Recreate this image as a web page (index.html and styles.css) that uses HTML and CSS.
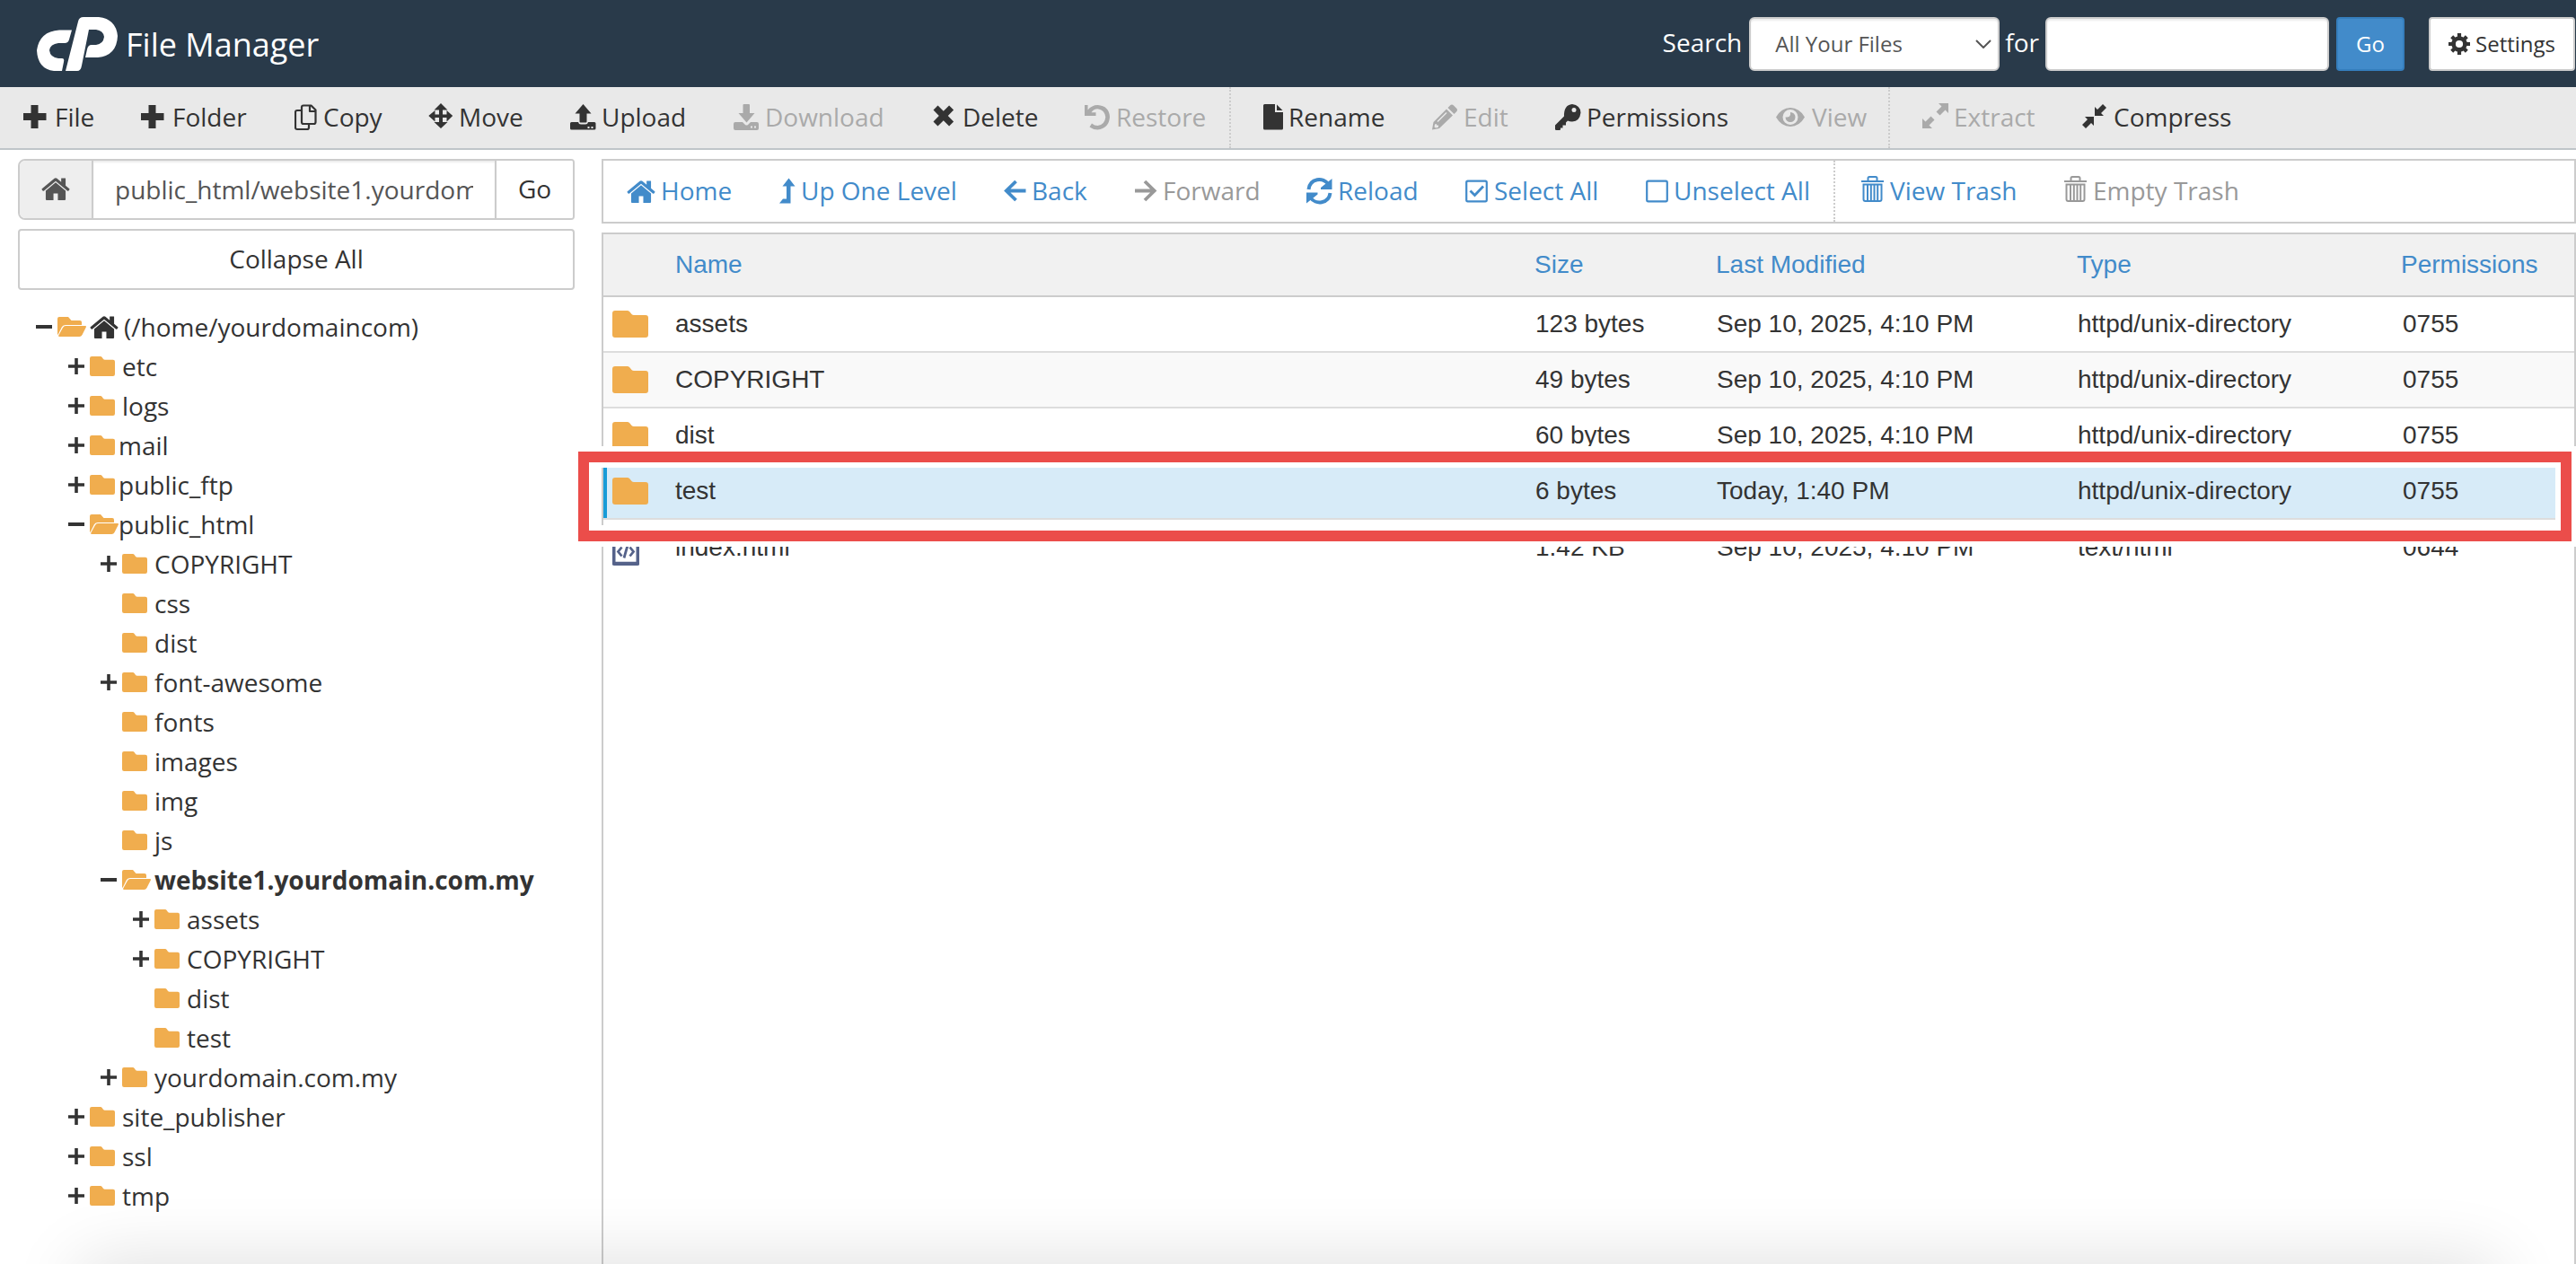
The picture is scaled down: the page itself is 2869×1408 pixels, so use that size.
FILE: index.html
```html
<!DOCTYPE html>
<html lang="en">
<head>
    <meta charset="UTF-8">
    <meta name="viewport" content="width=device-width, initial-scale=1.0">
    <title>File Manager</title>
    <link rel="stylesheet" href="styles.css">
</head>
<body>
    <!-- icon set -->
    <svg class="sprite">
        <symbol id="plus" viewBox="0 0 29 36"><path d="M8.500 4h8v9h9v8h-9v9h-8v-9h-8.500v-8h8.500z"/></symbol>
        <symbol id="copy" viewBox="0 0 26 36"><path fill="none" stroke="currentColor" stroke-width="2.200" stroke-linejoin="round" d="M10 4.500h8.500l5 5V23q0 2-2 2H10q-2 0-2-2V6.500q0-2 2-2zM17 5v6h6.500M8 10H3q-2 0-2 2v17q0 2 2 2h11q2 0 2-2v-3.500"/></symbol>
        <symbol id="move" viewBox="0 0 28 36"><path d="M14 2l7.500 7.500h-5.500v5h4.500v-4.500l6.700 6-6.700 6.500v-4.500H16v5h5.500L14 30l-7.500-7h5.500v-5H7.500v4.500L.3 16l7.200-6v4.500H12v-5H6.500z"/></symbol>
        <symbol id="upload" viewBox="0 0 29 36"><path d="M14.500 3l9 10.500h-5v9q0 1-1 1h-6q-1 0-1-1v-9h-5z"/><path d="M1.500 23h7.500q.5 2.500 3 2.500h5q2.500 0 3-2.500h7q1.500 0 1.500 1.500v5.500q0 1.500-1.500 1.500h-25.500Q0 31.500 0 30v-5.500Q0 23 1.500 23zm18 5v2h2v-2zm4 0v2h2v-2z"/></symbol>
        <symbol id="download" viewBox="0 0 29 36"><path d="M11.500 3h5.500q1 0 1 1v9h5.500l-9 10.500L5.500 13h5V4q0-1 1-1z"/><path d="M2 23h8l3 3q1.500 1 3 0l3-3h7q2 0 2 2v5q0 2-2 2H2q-2 0-2-2v-5q0-2 2-2zm17 4.500v2h2v-2zm4 0v2h2v-2z"/></symbol>
        <symbol id="remove" viewBox="0 0 27 36"><path d="M5.500 4.500l6.300 6.300 6.300-6.300 5 5-6.300 6.500 6.300 6.500-5 5-6.300-6.300-6.300 6.300-5-5L6.800 16 .5 9.500z"/></symbol>
        <symbol id="undo" viewBox="0 0 29 36"><path d="M0 4h3.500v5.500Q8 4 14.500 4 27.500 5 28 17.500 27 30 14.500 31.500q-5 0-9-3l2.500-4q3 2.500 6.500 2.500 8-1 8.800-9.500-1-8.500-8.800-9.300-4.500 0-7 4h5V16H0z"/></symbol>
        <symbol id="file" viewBox="0 0 22 36"><path d="M1.500 3H13v9h9v18q0 1.500-1.500 1.500h-19Q0 31.500 0 30V4.500Q0 3 1.500 3zM15 3.500l6.500 6.500H15z"/></symbol>
        <symbol id="pencil" viewBox="0 0 29 36"><path fill-rule="evenodd" d="M20 4.500q2-2 4 0l3 3q2 2 0 4l-2.500 2.500-7-7zM16 8.500l7 7L8 30l-8 1.500L1.500 23zM3 25.500l-.5 3 1.500 1 3-.7v-2.300H5v-1.500zM15.500 12L5.500 22l1 1 10-10z"/></symbol>
        <symbol id="key" viewBox="0 0 29 36"><path fill-rule="evenodd" d="M19 3q9 1 9.500 9.500-1 9.500-9.500 10-3 0-5-1l-2 2v3H8.500v3H6V31q0 1-1 1H1.500Q0 32 0 31v-4.500l10-10Q9.500 4 19 3zm2 4q-2.500 0-2.500 2.500T21 12t2.500-2.500T21 7z"/></symbol>
        <symbol id="eye" viewBox="0 0 34 36"><path fill-rule="evenodd" d="M0 17.500Q6 7 16 7t16 10.500Q26 28 16 28T0 17.500zM16 9a8.500 8.500 0 1 0 0 17 8.500 8.500 0 0 0 0-17zm0 3a5.500 5.500 0 1 1-5.500 5.500h2q2.500 0 3.500-2.500z"/></symbol>
        <symbol id="expand" viewBox="0 0 29 36"><path d="M18 2h11v11l-3.500-3.500-6 6-4-4 6-6zM0 30V19l3.500 3.500 6-6 4 4-6 6L11 30z"/></symbol>
        <symbol id="shrink" viewBox="0 0 29 36"><path d="M14 16V6l3 3 6-6 4 4-6 6 3 3zM13 17v10l-3-3-6 6-4-4 6-6-3-3z"/></symbol>
        <symbol id="house" viewBox="75 235 1642 1301"><path d="M1472 992v480q0 26-19 45t-45 19h-384v-384h-256v384h-384q-26 0-45-19t-19-45v-480q0-1 .5-3t.5-3l575-474 575 474q1 2 1 6zm223-69l-62 74q-8 9-21 11h-3q-13 0-21-7l-692-577-692 577q-12 8-24 7-13-2-21-11l-62-74q-8-10-7-23.500t11-21.500l719-599q32-26 76-26t76 26l244 204v-195q0-14 9-23t23-9h192q14 0 23 9t9 23v408l219 182q10 8 11 21.500t-7 23.500z"/></symbol>
        <symbol id="level-up" viewBox="0 0 18 36"><path d="M10.500 3.500l7 9h-5V31.500H0l4-5h4v-14H3.500z"/></symbol>
        <symbol id="arrow-left" viewBox="0 0 25 36"><path fill="none" stroke="currentColor" stroke-width="3.800" d="M24.500 17.500H3M13.500 7L2.800 17.500 13.500 28"/></symbol>
        <symbol id="arrow-right" viewBox="0 0 25 36"><path fill="none" stroke="currentColor" stroke-width="3.800" d="M0 17.500h21.500M11 7l10.700 10.500L11 28"/></symbol>
        <symbol id="refresh" viewBox="0 0 29 36"><path fill="none" stroke="currentColor" stroke-width="4" d="M2.500 16C4 3 19 2 24.500 10.500M26.500 20C25 32 10 33.500 4.500 25"/><path d="M28.500 4v12H16v-2zM0 31.500v-12h12.500v2z"/></symbol>
        <symbol id="check" viewBox="0 0 26 36"><rect x="1.200" y="6.700" width="22.600" height="22.600" rx="1.500" fill="none" stroke="currentColor" stroke-width="2.200"/><path fill="none" stroke="currentColor" stroke-width="2.800" d="M5.500 17.500l5 5 9.500-10"/></symbol>
        <symbol id="square" viewBox="0 0 25 36"><rect x="1.200" y="6.700" width="22.600" height="22.600" rx="1.500" fill="none" stroke="currentColor" stroke-width="2.200"/></symbol>
        <symbol id="trash" viewBox="0 0 26 36"><path fill="none" stroke="currentColor" stroke-width="2" d="M0 7h25M7.500 7V3.500q0-1.500 1.500-1.500h7q1.500 0 1.500 1.500V7M2.500 10.500h20V27q0 2-2 2h-16q-2 0-2-2zM7 11v18M10.800 11v18M14.500 11v18M18.200 11v18"/></symbol>
        <symbol id="cog" viewBox="0 0 24 24"><circle cx="12" cy="12" r="6.400" fill="none" stroke="currentColor" stroke-width="4.600"/><path stroke="currentColor" stroke-width="4.200" d="M12 0v5M12 19v5M0 12h5M19 12h5M3.700 3.700l3.500 3.500M16.800 16.800l3.500 3.500M3.700 20.300l3.500-3.500M16.800 7.200l3.500-3.500"/></symbol>
        <symbol id="folder" viewBox="0 0 40 30" preserveAspectRatio="none"><path d="M3 0h14q1.500 0 2.500 1.500l2 2.500q1 1 2.500 1h13q3 0 3 3v19q0 3-3 3H3q-3 0-3-3V3q0-3 3-3z"/></symbol>
        <symbol id="folder-open" viewBox="0 0 32 22"><path d="M2 0h10l3.500 4H25q2 0 2 2v3H9Q6.500 9 5 11L.500 20 0 19V2q0-2 2-2z"/><path d="M9 10h22q1.500 0 .8 1.500L27.500 20q-1 2-3 2H2Q.800 22 1.300 20.500L6 12q1-2 3-2z"/></symbol>
        <symbol id="expander" viewBox="0 0 18 18"><path d="M7.200 0h3.600v7.200H18v3.600h-7.200V18H7.200v-7.200H0V7.200h7.200z"/></symbol>
        <symbol id="collapser" viewBox="0 0 18 18"><path d="M0 7h18v4H0z"/></symbol>
        <symbol id="code" viewBox="0 0 30 40"><path fill="none" stroke="currentColor" stroke-width="3.500" d="M1.750 2h18l8.500 8v27.500H1.750z"/><path d="M0 36h30v2q0 2-2 2H2q-2 0-2-2z"/><path fill="none" stroke="currentColor" stroke-width="2.800" d="M10.500 19.500l-4 5 4 5M19.500 19.500l4 5-4 5M17 17.500l-4 14"/></symbol>
    </svg>

    <header class="navbar">
        <svg class="logo" viewBox="0 0 90 60"><path d="M52 0h17Q88 2 90 21q-1 22-22 24H54l2-9q1-5 5-5h5q8-1 9-9-1-7-9-8h-8l-8 40q-1 6-5 6H32L46 5q1-5 6-5z"/><path d="M39 14.500H25Q3 16 0 37q1 21 19 23h9l2-10q1-4-2-4h-4q-9-1-10-9 1-7 10-8h7q4 0 5-4z"/></svg>
        <h1>File Manager</h1>
        <form class="search">
            <label>Search</label>
            <div class="select">All Your Files <svg class="caret" viewBox="0 0 18 10"><path d="M1 1l8 8 8-8"/></svg></div>
            <label>for</label>
            <input type="text" class="query">
            <button type="button" class="btn-go">Go</button>
            <button type="button" class="btn-settings"><svg><use href="#cog"/></svg>Settings</button>
        </form>
    </header>

    <nav class="toolbar">
        <div class="group main-1">
            <a><svg class="i29"><use href="#plus"/></svg>File</a>
            <a><svg class="i29"><use href="#plus"/></svg>Folder</a>
            <a><svg class="i26"><use href="#copy"/></svg>Copy</a>
            <a><svg class="i28"><use href="#move"/></svg>Move</a>
            <a><svg class="i29"><use href="#upload"/></svg>Upload</a>
            <a class="disabled"><svg class="i29"><use href="#download"/></svg>Download</a>
            <a><svg class="i27"><use href="#remove"/></svg>Delete</a>
            <a class="disabled"><svg class="i29"><use href="#undo"/></svg>Restore</a>
        </div>
        <div class="group main-2">
            <a><svg class="i22"><use href="#file"/></svg>Rename</a>
            <a class="disabled"><svg class="i29"><use href="#pencil"/></svg>Edit</a>
            <a><svg class="i29"><use href="#key"/></svg>Permissions</a>
            <a class="disabled"><svg class="i34"><use href="#eye"/></svg>View</a>
        </div>
        <div class="group main-3">
            <a class="disabled"><svg class="i29"><use href="#expand"/></svg>Extract</a>
            <a><svg class="i29"><use href="#shrink"/></svg>Compress</a>
        </div>
    </nav>

    <main>
        <aside>
            <div class="path">
                <span class="addon"><svg class="house"><use href="#house"/></svg></span>
                <input type="text" class="field" value="public_html/website1.yourdomain.com.my">
                <button type="button">Go</button>
            </div>
            <button type="button" class="collapse">Collapse All</button>
            <ul class="tree">
                <li class="l0"><svg class="tog"><use href="#collapser"/></svg><svg class="dir open"><use href="#folder-open"/></svg><svg class="house"><use href="#house"/></svg>(/home/yourdomaincom)</li>
                <li class="l1"><svg class="tog"><use href="#expander"/></svg><svg class="dir"><use href="#folder"/></svg>etc</li>
                <li class="l1"><svg class="tog"><use href="#expander"/></svg><svg class="dir"><use href="#folder"/></svg>logs</li>
                <li class="l1 tight"><svg class="tog"><use href="#expander"/></svg><svg class="dir"><use href="#folder"/></svg>mail</li>
                <li class="l1 tight"><svg class="tog"><use href="#expander"/></svg><svg class="dir"><use href="#folder"/></svg>public_ftp</li>
                <li class="l1 tight"><svg class="tog"><use href="#collapser"/></svg><svg class="dir open"><use href="#folder-open"/></svg>public_html</li>
                <li class="l2"><svg class="tog"><use href="#expander"/></svg><svg class="dir"><use href="#folder"/></svg>COPYRIGHT</li>
                <li class="l2"><svg class="tog"></svg><svg class="dir"><use href="#folder"/></svg>css</li>
                <li class="l2"><svg class="tog"></svg><svg class="dir"><use href="#folder"/></svg>dist</li>
                <li class="l2"><svg class="tog"><use href="#expander"/></svg><svg class="dir"><use href="#folder"/></svg>font-awesome</li>
                <li class="l2"><svg class="tog"></svg><svg class="dir"><use href="#folder"/></svg>fonts</li>
                <li class="l2"><svg class="tog"></svg><svg class="dir"><use href="#folder"/></svg>images</li>
                <li class="l2"><svg class="tog"></svg><svg class="dir"><use href="#folder"/></svg>img</li>
                <li class="l2"><svg class="tog"></svg><svg class="dir"><use href="#folder"/></svg>js</li>
                <li class="l2 current"><svg class="tog"><use href="#collapser"/></svg><svg class="dir open"><use href="#folder-open"/></svg>website1.yourdomain.com.my</li>
                <li class="l3"><svg class="tog"><use href="#expander"/></svg><svg class="dir"><use href="#folder"/></svg>assets</li>
                <li class="l3"><svg class="tog"><use href="#expander"/></svg><svg class="dir"><use href="#folder"/></svg>COPYRIGHT</li>
                <li class="l3"><svg class="tog"></svg><svg class="dir"><use href="#folder"/></svg>dist</li>
                <li class="l3"><svg class="tog"></svg><svg class="dir"><use href="#folder"/></svg>test</li>
                <li class="l2"><svg class="tog"><use href="#expander"/></svg><svg class="dir"><use href="#folder"/></svg>yourdomain.com.my</li>
                <li class="l1"><svg class="tog"><use href="#expander"/></svg><svg class="dir"><use href="#folder"/></svg>site_publisher</li>
                <li class="l1"><svg class="tog"><use href="#expander"/></svg><svg class="dir"><use href="#folder"/></svg>ssl</li>
                <li class="l1"><svg class="tog"><use href="#expander"/></svg><svg class="dir"><use href="#folder"/></svg>tmp</li>
            </ul>
        </aside>

        <section class="content">
            <div class="actions">
                <div class="group nav-1">
                    <a><svg class="house"><use href="#house"/></svg>Home</a>
                    <a><svg class="i18"><use href="#level-up"/></svg>Up One Level</a>
                    <a><svg class="i25"><use href="#arrow-left"/></svg>Back</a>
                    <a class="disabled"><svg class="i25"><use href="#arrow-right"/></svg>Forward</a>
                    <a><svg class="i29"><use href="#refresh"/></svg>Reload</a>
                    <a><svg class="i26"><use href="#check"/></svg>Select All</a>
                    <a><svg class="i25"><use href="#square"/></svg>Unselect All</a>
                </div>
                <div class="group nav-2">
                    <a><svg class="i26"><use href="#trash"/></svg>View Trash</a>
                    <a class="disabled"><svg class="i26"><use href="#trash"/></svg>Empty Trash</a>
                </div>
            </div>

            <div class="files">
                <div class="row head">
                    <span></span><span>Name</span><span>Size</span><span>Last Modified</span><span>Type</span><span>Permissions</span>
                </div>
                <div class="row">
                    <svg class="folder"><use href="#folder"/></svg><span>assets</span><span>123 bytes</span><span>Sep 10, 2025, 4:10 PM</span><span>httpd/unix-directory</span><span>0755</span>
                </div>
                <div class="row even">
                    <svg class="folder"><use href="#folder"/></svg><span>COPYRIGHT</span><span>49 bytes</span><span>Sep 10, 2025, 4:10 PM</span><span>httpd/unix-directory</span><span>0755</span>
                </div>
                <div class="row">
                    <svg class="folder"><use href="#folder"/></svg><span>dist</span><span>60 bytes</span><span>Sep 10, 2025, 4:10 PM</span><span>httpd/unix-directory</span><span>0755</span>
                </div>
                <div class="row selected">
                    <svg class="folder"><use href="#folder"/></svg><span>test</span><span>6 bytes</span><span>Today, 1:40 PM</span><span>httpd/unix-directory</span><span>0755</span>
                </div>
                <div class="row last">
                    <svg class="code"><use href="#code"/></svg><span>index.html</span><span>1.42 KB</span><span>Sep 10, 2025, 4:10 PM</span><span>text/html</span><span>0644</span>
                </div>
            </div>
        </section>
    </main>

    <div class="highlight"></div>
    <div class="fade"></div>
</body>
</html>
```
FILE: styles.css
```css
* {
    box-sizing: border-box;
}
body {
    margin: 0;
    height: 1408px;
    overflow: hidden;
    position: relative;
    display: flex;
    flex-direction: column;
    background-color: #fff;
    color: #333;
    font-family: "Open Sans", sans-serif;
    font-size: 28px;
}
svg {
    fill: currentColor;
    flex: none;
}
button, input {
    font-family: inherit;
    font-size: inherit;
    color: inherit;
}
.sprite {
    display: none;
}

/* header */
.navbar {
    flex: none;
    height: 97px;
    padding: 0 1px 0 41px;
    display: flex;
    align-items: center;
    background-color: #293a4a;
    color: #fff;
}
.logo {
    width: 90px;
    height: 60px;
    margin-top: 1px;
}
h1 {
    margin: 1px 0 0 9px;
    font-size: 36px;
    font-weight: normal;
}
.search {
    margin-left: auto;
    display: flex;
    align-items: center;
}
.search label {
    padding-bottom: 4px;
}
.select, .query {
    height: 60px;
    border: 2px solid #ccc;
    border-radius: 6px;
    background-color: #fff;
    color: #555;
    box-shadow: inset 0 2px 2px rgba(0, 0, 0, 0.075);
}
.select {
    width: 279px;
    margin: 0 6px 0 8px;
    padding: 0 7px 0 27px;
    display: flex;
    align-items: center;
    justify-content: space-between;
    font-size: 24px;
}
.caret {
    width: 18px;
    height: 10px;
    fill: none;
    stroke: #555;
    stroke-width: 2;
}
.query {
    width: 316px;
    margin-left: 7px;
}
.btn-go, .btn-settings {
    height: 60px;
    padding: 0;
    border-radius: 4px;
    font-size: 24px;
}
.btn-go {
    width: 76px;
    margin: 0 27px 0 8px;
    background-color: #428bca;
    border: 2px solid #357ebd;
    color: #fff;
}
.btn-settings {
    width: 163px;
    display: flex;
    align-items: center;
    justify-content: center;
    gap: 6px;
    background-color: #fff;
    border: 2px solid #ccc;
    color: #333;
}
.btn-settings svg {
    width: 24px;
    height: 24px;
}

/* toolbars */
.toolbar {
    flex: none;
    display: flex;
    height: 70px;
    background-color: #e9e9e9;
    border-bottom: 2px solid #bfc5c9;
}
.group {
    display: grid;
}
.group a {
    display: flex;
    align-items: center;
    gap: 6px;
    padding-bottom: 2px;
    white-space: nowrap;
}
.group svg {
    height: 36px;
    margin-top: 2px;
}
.main-1 {
    padding-left: 26px;
    grid-template-columns: 131px 171px 149px 158px 182px 222px 169px 161px;
    border-right: 2px dotted #ccc;
}
.main-2 {
    padding-left: 36px;
    grid-template-columns: 188px 137px 246px 125px;
    border-right: 2px dotted #ccc;
}
.main-3 {
    padding-left: 36px;
    grid-template-columns: 178px 180px;
}
.toolbar .disabled {
    color: #aaa;
}
.i18 { width: 18px; }
.i22 { width: 22px; }
.i25 { width: 25px; }
.i26 { width: 26px; }
.i27 { width: 27px; }
.i28 { width: 28px; }
.i29 { width: 29px; }
.i34 { width: 34px; }
.house, .group .house {
    width: 32px;
    height: 25px;
}

main {
    flex: 1;
    min-height: 0;
    display: flex;
}

/* sidebar */
aside {
    flex: none;
    width: 670px;
    padding: 10px 30px 0 20px;
}
.path {
    display: flex;
    height: 68px;
    border: 2px solid #ccc;
    border-radius: 8px 4px 4px 8px;
    overflow: hidden;
}
.addon {
    width: 82px;
    padding-bottom: 2px;
    display: flex;
    align-items: center;
    justify-content: center;
    background-color: #eee;
    border-right: 2px solid #ccc;
    color: #555;
}
.field {
    flex: 1;
    min-width: 0;
    padding: 0 24px;
    border: 0;
    color: #555;
    box-shadow: inset 0 2px 2px rgba(0, 0, 0, 0.075);
}
.path button {
    width: 87px;
    padding: 0 0 2px;
    border: 0;
    border-left: 2px solid #ccc;
    background-color: #fff;
}
.collapse {
    display: block;
    width: 100%;
    height: 68px;
    margin-top: 10px;
    padding: 0 0 2px;
    border: 2px solid #ccc;
    border-radius: 4px;
    background-color: #fff;
}
.tree {
    list-style: none;
    margin: 19px 0 0;
    padding: 0;
}
.tree li {
    display: flex;
    align-items: center;
    height: 44px;
    white-space: nowrap;
}
.l0 { padding-left: 20px; }
.l1 { padding-left: 56px; }
.l2 { padding-left: 92px; }
.l3 { padding-left: 128px; }
.tog {
    width: 18px;
    height: 18px;
    margin-right: 6px;
}
.dir {
    width: 28px;
    height: 22px;
    margin-right: 8px;
    color: #f0ad4e;
}
.open {
    width: 32px;
    margin-right: 4px;
}
.l0 .house {
    margin-right: 6px;
}
.tight .dir {
    margin-right: 4px;
}
.tight .open {
    margin-right: 0;
}
.current {
    font-weight: bold;
}

/* file list */
.content {
    flex: 1;
    min-width: 0;
    padding-top: 10px;
    display: flex;
    flex-direction: column;
}
.actions {
    flex: none;
    display: flex;
    height: 72px;
    border: 2px solid #ccc;
    color: #428bca;
}
.actions .disabled {
    color: #999;
}
.nav-1 {
    padding-left: 26px;
    grid-template-columns: 170px 250px 146px 191px 177px 201px 209px;
    border-right: 2px dotted #ccc;
}
.nav-2 {
    padding-left: 29px;
    grid-template-columns: 226px 200px;
}
.files {
    flex: 1;
    margin-top: 10px;
    border: 2px solid #ccc;
    border-bottom: 0;
    font-family: "Liberation Sans", Arial, sans-serif;
}
.row {
    display: grid;
    grid-template-columns: 70px 958px 202px 402px 362px 1fr;
    align-items: center;
    height: 62px;
    padding-left: 10px;
    border-bottom: 2px solid #ddd;
    white-space: nowrap;
}
.head {
    grid-template-columns: 70px 957px 202px 402px 361px 1fr;
    height: 70px;
    background-color: #f1f1f1;
    border-bottom-color: #ccc;
    color: #428bca;
}
.even {
    background-color: #f9f9f9;
}
.selected {
    background-color: #d7ebf8;
    box-shadow: inset 4px 0 0 #179bd7;
}
.last {
    border-bottom: 0;
}
.folder {
    width: 40px;
    height: 30px;
    color: #f0ad4e;
}
.code {
    width: 30px;
    height: 40px;
    color: #55628a;
}

/* marker around the selected folder */
.highlight {
    position: absolute;
    left: 644px;
    top: 503px;
    width: 2220px;
    height: 100px;
    border: 12px solid #eb4d4a;
    box-shadow: 0 0 0 6px #fff, inset 0 0 0 6px #fff;
}

/* soft shadow along the bottom edge */
.fade {
    position: absolute;
    left: 90px;
    right: 90px;
    top: 1408px;
    height: 80px;
    box-shadow: 0 0 80px rgba(0, 0, 0, 0.14);
}
```
